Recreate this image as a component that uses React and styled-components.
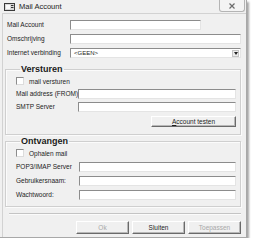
import React from 'react'
import styled, { createGlobalStyle } from 'styled-components'

const Global = createGlobalStyle`
  html, body { margin: 0; padding: 0; background: #fff; }
  body {
    font-family: "Liberation Sans", Arial, sans-serif;
    font-size: 6.5px;
    color: #1c1c1c;
  }
`

const Window = styled.div`
  width: 247px;
  box-sizing: border-box;
  background: #f0f0f0;
  border-right: 1px solid #a8a8a8;
  border-bottom: 1px solid #a8a8a8;
  box-shadow: 2px 2px 2px rgba(0, 0, 0, 0.35);
  display: flex;
  flex-direction: column;
`

const TitleBar = styled.div`
  height: 13px;
  display: flex;
  align-items: center;
  padding-left: 4px;
  gap: 4px;
  font-size: 7.5px;
  color: #222;
`

const CloseButton = styled.div`
  margin-left: auto;
  margin-right: 1px;
  align-self: flex-start;
  width: 26px;
  height: 12px;
  box-sizing: border-box;
  border: 1px solid #b4b4b4;
  border-top: none;
  border-radius: 0 0 3px 3px;
  background: #f4f4f4;
  display: flex;
  align-items: center;
  justify-content: center;
`

const Client = styled.div`
  margin-left: 2px;
  border-top: 1px solid #d2d2d2;
  border-left: 1px solid #d2d2d2;
  padding: 6px 5px 3px 2px;
  display: flex;
  flex-direction: column;
`

const TopRows = styled.div`
  display: flex;
  flex-direction: column;
  gap: 4px;
  padding-left: 2px;
`

const Row = styled.div`
  display: grid;
  grid-template-columns: ${p => p.$label}px 1fr;
  align-items: center;
  height: 10px;
`

const Label = styled.span`
  white-space: nowrap;
  line-height: 10px;
`

const Input = styled.div`
  height: 10px;
  box-sizing: border-box;
  width: ${p => (p.$w ? `${p.$w}px` : 'auto')};
  background: #fff;
  border-top: 1px solid #8c8c8c;
  border-left: 1px solid #8c8c8c;
  border-right: 1px solid #e4e4e4;
  border-bottom: 1px solid #e4e4e4;
`

const Select = styled(Input)`
  display: flex;
  align-items: center;
  justify-content: space-between;
  padding-left: 3px;
  font-size: 6px;
`

const Arrow = styled.span`
  width: 7px;
  height: 7px;
  margin-right: 1px;
  background: #ececec;
  border: 1px solid #c4c4c4;
  box-sizing: border-box;
  display: flex;
  align-items: center;
  justify-content: center;
`

const Group = styled.fieldset`
  margin: ${p => p.$top}px 0 0 0;
  padding: 3px 4px ${p => p.$bottom}px 10px;
  border: 1px solid #cfcfcf;
  box-shadow: inset 1px 1px 0 #fbfbfb, 1px 1px 0 #fbfbfb;
  display: flex;
  flex-direction: column;
  gap: ${p => p.$gap}px;
`

const Legend = styled.legend`
  font-size: 9px;
  font-weight: bold;
  line-height: 9px;
  padding: 0 1px;
  margin-left: 4px;
  color: #1a1a1a;
`

const CheckRow = styled.label`
  display: flex;
  align-items: center;
  gap: 5px;
  height: 8px;
  margin-bottom: 1px;
`

const Box = styled.span`
  width: 8px;
  height: 8px;
  box-sizing: border-box;
  background: #fff;
  border-top: 1px solid #8c8c8c;
  border-left: 1px solid #8c8c8c;
  border-right: 1px solid #dcdcdc;
  border-bottom: 1px solid #dcdcdc;
`

const Button = styled.div`
  width: ${p => p.$w}px;
  height: ${p => p.$h}px;
  box-sizing: border-box;
  border-top: 1px solid #fff;
  border-left: 1px solid #fff;
  border-right: 1px solid #6a6a6a;
  border-bottom: 1px solid #6a6a6a;
  box-shadow: inset -1px -1px 0 #b8b8b8;
  background: #f0f0f0;
  display: flex;
  align-items: center;
  justify-content: center;
  font-size: 6.5px;
  color: ${p => (p.$disabled ? '#a8a8a8' : '#1c1c1c')};
`

const ButtonLine = styled.div`
  display: flex;
  justify-content: flex-end;
  gap: 3px;
  margin-top: ${p => p.$top}px;
`

const Separator = styled.div`
  margin: 6px 0 0 4px;
  height: 0;
  border-top: 1px solid #c4c4c4;
  border-bottom: 1px solid #fbfbfb;
`

const AppIcon = () => (
  <svg width="11" height="8" viewBox="0 0 11 8">
    <rect x="0.5" y="0.5" width="10" height="7" fill="#d8d8d8" stroke="#3a3a3a" />
    <rect x="2" y="2" width="4" height="4" fill="#fafafa" />
    <rect x="7" y="2" width="2.5" height="1" fill="#333" />
    <rect x="7" y="4" width="2.5" height="1" fill="#333" />
  </svg>
)

const CloseIcon = () => (
  <svg width="6" height="6" viewBox="0 0 6 6">
    <path d="M0.5 0.5 L5.5 5.5 M5.5 0.5 L0.5 5.5" stroke="#6c6c6c" strokeWidth="1.2" />
  </svg>
)

const DownIcon = () => (
  <svg width="4" height="3" viewBox="0 0 4 3">
    <path d="M0 0 H4 L2 3 Z" fill="#222" />
  </svg>
)

export default function App() {
  return (
    <>
      <Global />
      <Window>
        <TitleBar>
          <AppIcon />
          <span>Mail Account</span>
          <CloseButton><CloseIcon /></CloseButton>
        </TitleBar>
        <Client>
          <TopRows>
            <Row $label={63}>
              <Label>Mail Account</Label>
              <Input $w={131} />
            </Row>
            <Row $label={63}>
              <Label>Omschrijving</Label>
              <Input />
            </Row>
            <Row $label={63}>
              <Label>Internet verbinding</Label>
              <Select>
                <span>&lt;GEEN&gt;</span>
                <Arrow><DownIcon /></Arrow>
              </Select>
            </Row>
          </TopRows>

          <Group $top={7} $bottom={7} $gap={3}>
            <Legend>Versturen</Legend>
            <CheckRow><Box /><span>mail versturen</span></CheckRow>
            <Row $label={62}>
              <Label>Mail address (FROM)</Label>
              <Input />
            </Row>
            <Row $label={62}>
              <Label>SMTP Server</Label>
              <Input />
            </Row>
            <ButtonLine $top={1}>
              <Button $w={85} $h={11}><span><u>A</u>ccount testen</span></Button>
            </ButtonLine>
          </Group>

          <Group $top={2} $bottom={6} $gap={4}>
            <Legend>Ontvangen</Legend>
            <CheckRow><Box /><span>Ophalen mail</span></CheckRow>
            <Row $label={63}>
              <Label>POP3/IMAP Server</Label>
              <Input />
            </Row>
            <Row $label={63}>
              <Label>Gebruikersnaam:</Label>
              <Input />
            </Row>
            <Row $label={63}>
              <Label>Wachtwoord:</Label>
              <Input />
            </Row>
          </Group>

          <Separator />
          <ButtonLine $top={6}>
            <Button $w={53} $h={13} $disabled>Ok</Button>
            <Button $w={53} $h={13}>Sluiten</Button>
            <Button $w={53} $h={13} $disabled>Toepassen</Button>
          </ButtonLine>
        </Client>
      </Window>
    </>
  )
}
